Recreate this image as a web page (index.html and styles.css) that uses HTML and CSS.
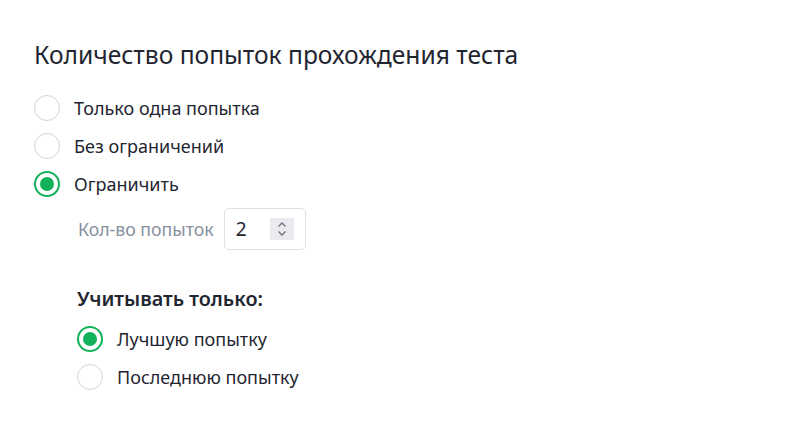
FILE: index.html
```html
<!DOCTYPE html>
<html lang="ru">
<head>
    <meta charset="UTF-8">
    <meta name="viewport" content="width=device-width, initial-scale=1.0">
    <title>Количество попыток</title>
    <link rel="stylesheet" href="styles.css">
</head>
<body>
    <div class="container">
        <h2 class="title">Количество попыток прохождения теста</h2>
        <div class="options">
            <label class="option">
                <span class="radio"></span>
                <span>Только одна попытка</span>
            </label>
            <label class="option">
                <span class="radio"></span>
                <span>Без ограничений</span>
            </label>
            <label class="option">
                <span class="radio checked"></span>
                <span>Ограничить</span>
            </label>
        </div>
        <div class="count">
            <span class="count-label">Кол-во попыток</span>
            <div class="number">
                <span class="value">2</span>
                <span class="spin">
                    <svg width="10" height="16" viewBox="0 0 10 16">
                        <path d="M1.5 5.5 L5 2 L8.5 5.5" fill="none" stroke="#6b7280" stroke-width="1.3"/>
                        <path d="M1.5 10.5 L5 14 L8.5 10.5" fill="none" stroke="#6b7280" stroke-width="1.3"/>
                    </svg>
                </span>
            </div>
        </div>
        <div class="sub">
            <h3 class="sub-title">Учитывать только:</h3>
            <div class="options">
                <label class="option">
                    <span class="radio checked"></span>
                    <span>Лучшую попытку</span>
                </label>
                <label class="option">
                    <span class="radio"></span>
                    <span>Последнюю попытку</span>
                </label>
            </div>
        </div>
    </div>
</body>
</html>
```

FILE: styles.css
```css
body {
    margin: 0;
    background-color: #fff;
    font-family: "Noto Sans", sans-serif;
    color: #1f2631;
}
.container {
    padding: 39px 34px;
}
.title {
    font-size: 24.6px;
    font-weight: 400;
    margin: 0 0 18px 0;
    line-height: 32px;
}
.options {
    display: flex;
    flex-direction: column;
}
.option {
    display: flex;
    align-items: center;
    gap: 14px;
    height: 38px;
    font-size: 18px;
    cursor: pointer;
}
.radio {
    width: 26px;
    height: 26px;
    box-sizing: border-box;
    border: 1px solid #cfd4dc;
    border-radius: 50%;
    display: flex;
    align-items: center;
    justify-content: center;
}
.radio.checked {
    border: 2px solid #13b25a;
}
.radio.checked::after {
    content: "";
    width: 14px;
    height: 14px;
    border-radius: 50%;
    background-color: #13b25a;
}
.count {
    display: flex;
    align-items: center;
    gap: 10px;
    margin: 5px 0 0 44px;
}
.count-label {
    font-size: 17.7px;
    color: #8690a0;
}
.number {
    width: 82px;
    height: 42px;
    box-sizing: border-box;
    border: 1px solid #dde1e7;
    border-radius: 5px;
    display: flex;
    align-items: center;
    justify-content: space-between;
    padding: 0 11px 0 11px;
    font-size: 19px;
}
.spin {
    width: 24px;
    height: 22px;
    background-color: #ebebef;
    display: flex;
    align-items: center;
    justify-content: center;
}
.sub {
    margin: 35px 0 0 43px;
}
.sub-title {
    font-size: 19.8px;
    font-weight: 600;
    margin: 0 0 7px 0;
    line-height: 28px;
}
```
